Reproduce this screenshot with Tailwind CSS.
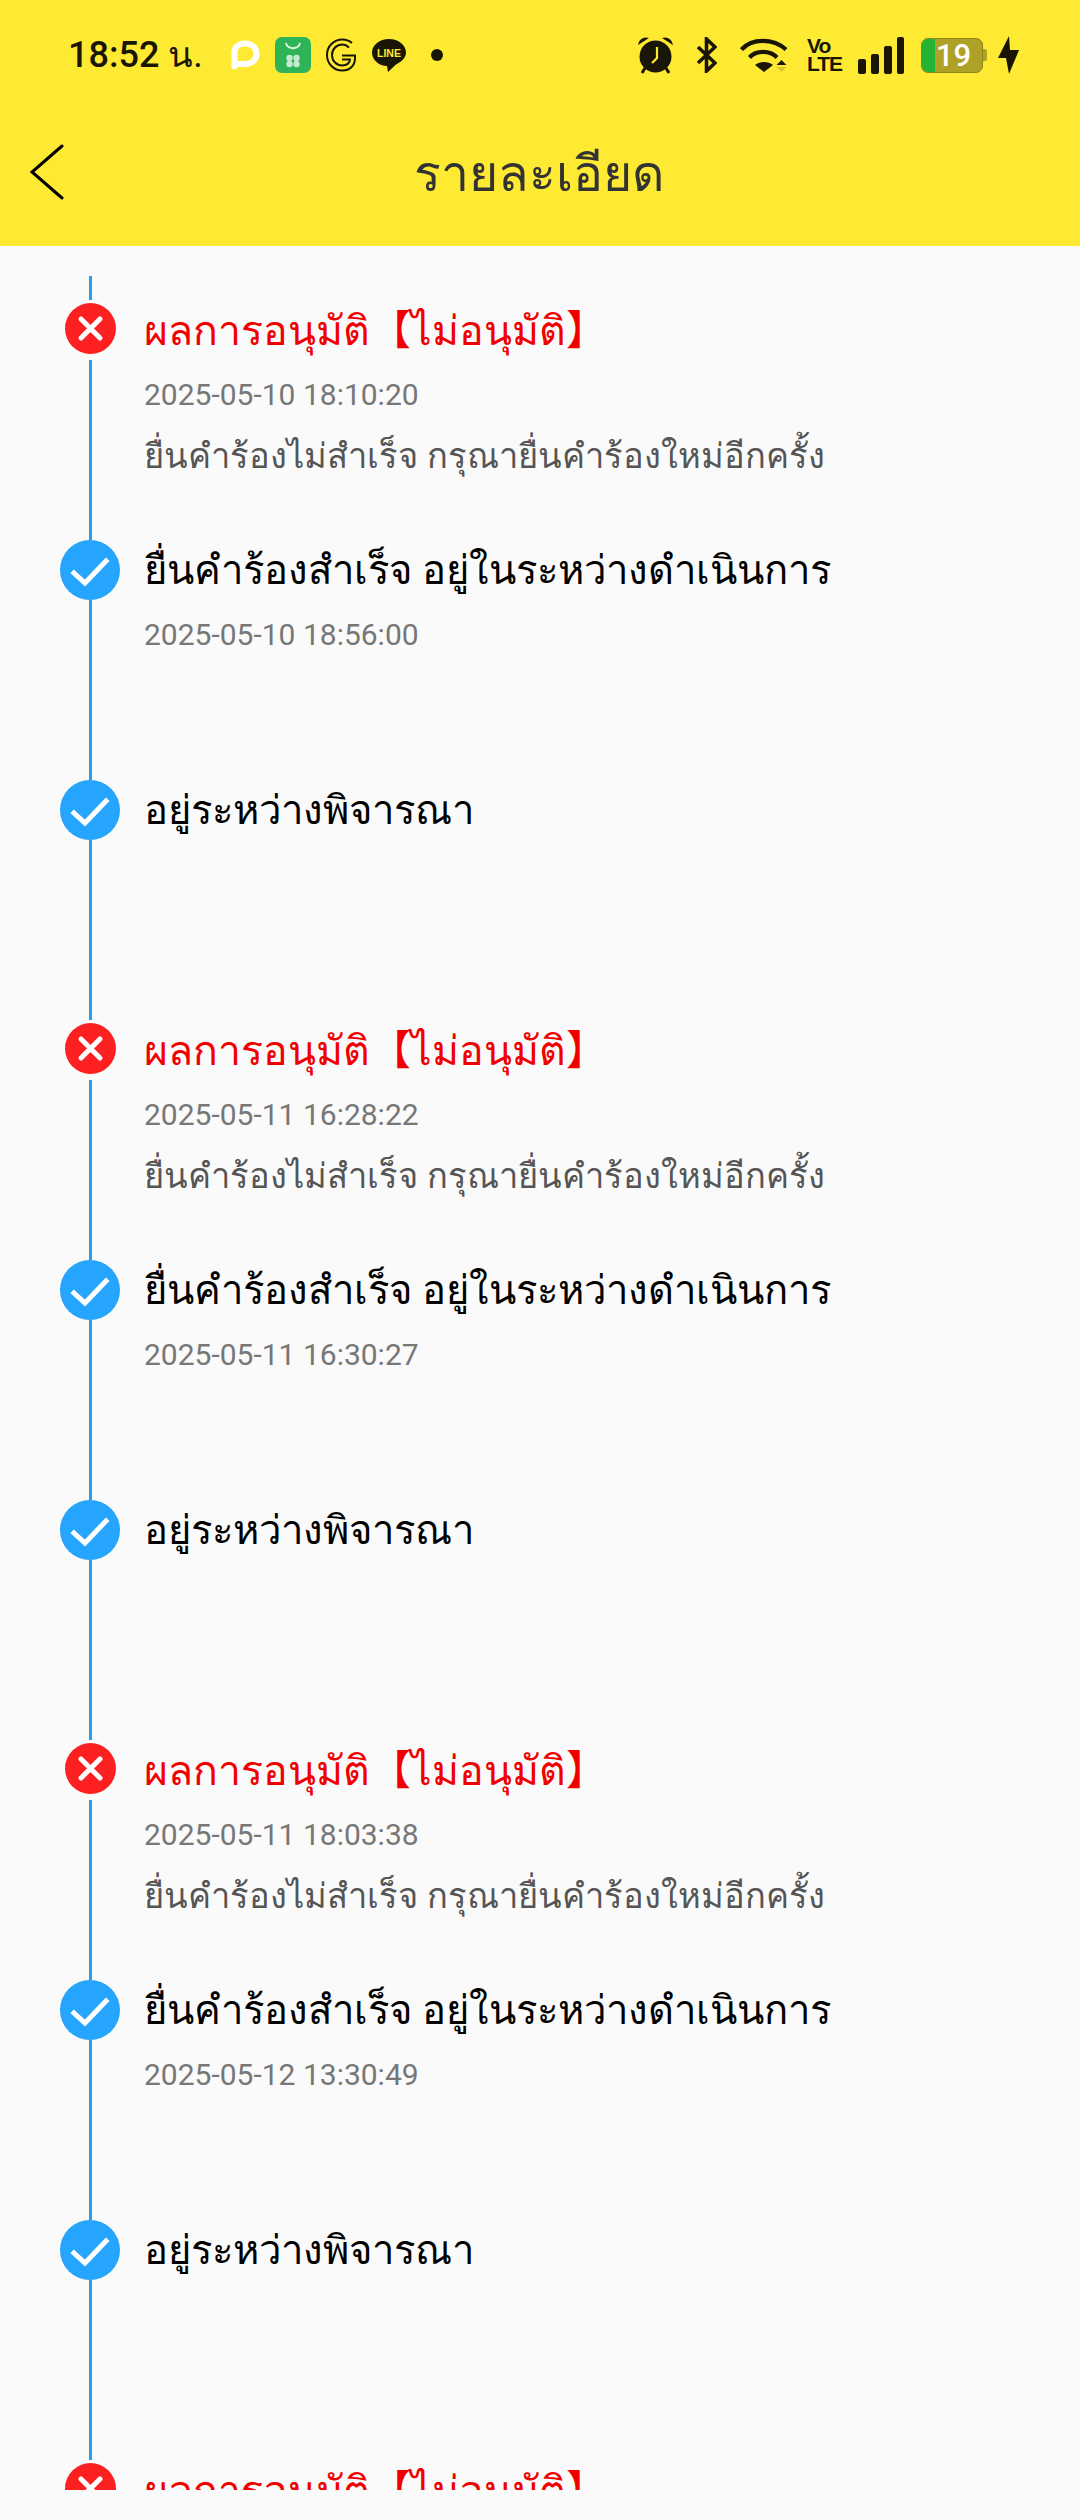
<!DOCTYPE html>
<html lang="th">
<head>
    <meta charset="UTF-8">
    <meta name="viewport" content="width=device-width, initial-scale=1.0">
    <title>รายละเอียด</title>
    <script src="https://cdn.jsdelivr.net/npm/@tailwindcss/browser@4"></script>
</head>
<body class="bg-[#fafafa] font-['Roboto','Noto_Sans','Noto_Sans_CJK_SC',sans-serif]">
<div class="w-[1080px] h-[2520px] overflow-hidden">

    <!-- Yellow header -->
    <header class="bg-[#ffea33] h-[246px]">
        <!-- Status bar -->
        <div class="h-[108px] flex items-center pl-[68px] pt-[2px] text-[#1a1605]">
            <span class="text-[36px] font-medium leading-none w-[162px] whitespace-nowrap">18:52 <span class="text-[36px] font-normal">น.</span></span>

            <svg class="w-[30px] h-[30px]" viewBox="0 0 30 30"><path d="M15 3.500c7 0 11.500 4.500 11.500 10.500S21.500 24 15 24H8c-2 0-3.500 1.500-3.500 2.500V14C3.500 8 8 3.500 15 3.500Z" fill="none" stroke="#fff" stroke-width="6" stroke-linejoin="round"/></svg>

            <svg class="w-[36px] h-[36px] ml-[15px]" viewBox="0 0 36 36"><rect width="36" height="36" rx="7" fill="#2eb356"/><path d="M11 6c1 7 13 7 14 0" fill="none" stroke="#d8f3dc" stroke-width="2"/><g fill="#c6ead0"><circle cx="14.500" cy="21" r="3.200"/><circle cx="21.500" cy="21" r="3.200"/><circle cx="14.500" cy="27" r="3.200"/><circle cx="21.500" cy="27" r="3.200"/></g></svg>

            <svg class="w-[30px] h-[34px] ml-[15px]" viewBox="0 0 30 34" fill="none" stroke="#1a1605" stroke-width="2"><path d="M26 5C23 2.500 20 1.500 16.500 1.500 7.500 1.500 1 8.500 1 17s6.500 15.500 15.500 15.500c7 0 12.500-4.500 12.500-12.500v-2.500H16"/><path d="M23 9.500C21 7.500 19 6.500 16.500 6.500 10.500 6.500 6 11 6 17s4.500 10.500 10.500 10.500c4.500 0 7.500-3 7.500-6H16"/></svg>

            <svg class="w-[34px] h-[33px] ml-[16px]" viewBox="0 0 34 33"><path d="M17 0C7.600 0 0 6 0 13.500S7 27 15 27l1 6 8-7.500c6-3 10-7 10-12C34 6 26.400 0 17 0Z" fill="#1a1605"/><text x="17" y="18" text-anchor="middle" font-family="Liberation Sans" font-weight="700" font-size="10.500" fill="#ffea33">LINE</text></svg>

            <span class="w-[12px] h-[12px] rounded-full bg-[#1a1605] ml-[25px]"></span>

            <svg class="w-[37px] h-[38px] ml-[194px]" viewBox="0 0 37 38"><circle cx="18.500" cy="20.500" r="16" fill="#1a1605"/><path d="M1 9C2 3 7 0 12 2ZM36 9C35 3 30 0 25 2Z" fill="#1a1605"/><path d="M8 32l-3 5M29 32l3 5" stroke="#1a1605" stroke-width="3"/><path d="M20 11v11l-5 5" fill="none" stroke="#ffea33" stroke-width="2.200"/></svg>

            <svg class="w-[21px] h-[36px] ml-[22px]" viewBox="0 0 21 36" fill="none" stroke="#1a1605" stroke-width="3.600"><path d="M2 10l17 16-8.500 8V2L19 10 2 26"/></svg>

            <svg class="w-[48px] h-[36px] ml-[23px]" viewBox="0 0 48 36"><g fill="none" stroke="#1a1605" stroke-width="4.200"><path d="M1.500 12.500C12 1 33 1 46 12.500"/><path d="M9.500 20.500C16 13 30 13 37 20.500"/></g><path d="M24 35l-9-7c4.500-4 13.500-4 18 0Z" fill="#1a1605"/><path d="M41.500 23l5 5h-10Z" fill="#1a1605"/><path d="M36.500 30h10l-5 5Z" fill="#d9c52d"/></svg>

            <div class="w-[32px] h-[36px] ml-[19px] font-['Liberation_Sans',sans-serif] font-bold text-[21px] leading-[18px] tracking-[-1px]">Vo<br>LTE</div>

            <div class="flex items-end gap-[5px] h-[37px] ml-[19px]">
                <span class="w-[8px] h-[15px] rounded-[2px] bg-[#1a1605]"></span>
                <span class="w-[8px] h-[20px] rounded-[2px] bg-[#1a1605]"></span>
                <span class="w-[8px] h-[28px] rounded-[2px] bg-[#1a1605]"></span>
                <span class="w-[7px] h-[37px] rounded-[2px] bg-[#1a1605]"></span>
            </div>

            <!-- Battery -->
            <div class="flex items-center ml-[17px]">
                <div class="relative w-[62px] h-[35px] rounded-[7px] border border-[#8f8418] bg-[#aea127] overflow-hidden">
                    <span class="absolute left-0 top-0 h-full w-[13px] bg-[#25b334]"></span>
                    <span class="absolute left-[14px] top-0 w-[34px] text-center text-[31px] font-medium leading-[33px] text-white">19</span>
                </div>
                <span class="w-[4px] h-[12px] rounded-r-[2px] bg-[#aea127]"></span>
            </div>

            <svg class="w-[21px] h-[38px] ml-[11px]" viewBox="0 0 21 38"><path d="M11 0L0 22h8L11 38 21 14h-9Z" fill="#1a1605"/></svg>
        </div>

        <!-- Title bar -->
        <div class="relative h-[138px] flex items-center justify-center">
            <svg class="absolute left-[30px] top-[36px] w-[34px] h-[56px]" viewBox="0 0 34 56" fill="none" stroke="#000" stroke-width="3" stroke-linecap="round"><path d="M32 2L2 28l30 26"/></svg>
            <h1 class="text-[#333] text-[50px] font-normal leading-none pb-[6px] pr-[3px]">รายละเอียด</h1>
        </div>
    </header>

    <!-- Timeline -->
    <main id="timeline" class="h-[2244px] pt-[30px] pl-[60px] overflow-hidden"></main>
</div>

<script>
    const rejectIcon = `
        <div class="w-[3px] h-[24px] bg-[#2a9fec]"></div>
        <svg class="w-[51px] h-[51px] mt-[3px] shrink-0" viewBox="0 0 51 51"><circle cx="25.500" cy="25.500" r="25.500" fill="#fd2020"/><path d="M16 16l19 19M35 16L16 35" stroke="#fff" stroke-width="5" stroke-linecap="round"/></svg>
        <div class="w-[3px] flex-1 mt-[6px] bg-[#2a9fec]"></div>`;
    const okIcon = `
        <div class="w-[3px] h-[24px] bg-[#2a9fec]"></div>
        <svg class="w-[60px] h-[60px] shrink-0" viewBox="0 0 60 60"><circle cx="30" cy="30" r="30" fill="#25a5fd"/><path d="M14 33l11 10 21-22" fill="none" stroke="#fff" stroke-width="5" stroke-linecap="square"/></svg>
        <div class="w-[3px] flex-1 bg-[#2a9fec]"></div>`;

    const rejectedTitle = `<p class="text-[41px] leading-[50px] mt-[2px] text-[#f00000] whitespace-nowrap">ผลการอนุมัติ【ไม่อนุมัติ】</p>`;

    const groups = [
        ['2025-05-10 18:10:20', '2025-05-10 18:56:00'],
        ['2025-05-11 16:28:22', '2025-05-11 16:30:27'],
        ['2025-05-11 18:03:38', '2025-05-12 13:30:49']
    ];

    function row(icon, body) {
        return `<div class="flex h-[240px]"><div class="w-[60px] flex flex-col items-center">${icon}</div><div class="ml-[24px] pt-[28px]">${body}</div></div>`;
    }

    let html = '';
    for (const [rejected, submitted] of groups) {
        html += row(rejectIcon, `
            ${rejectedTitle}
            <p class="text-[30px] leading-[40px] mt-[19px] text-[#777]">${rejected}</p>
            <p class="text-[34.500px] leading-[40px] mt-[21px] text-[#555] whitespace-nowrap">ยื่นคำร้องไม่สำเร็จ กรุณายื่นคำร้องใหม่อีกครั้ง</p>`);
        html += row(okIcon, `
            <p class="text-[40px] leading-[50px] mt-[2px] text-black whitespace-nowrap">ยื่นคำร้องสำเร็จ อยู่ในระหว่างดำเนินการ</p>
            <p class="text-[30px] leading-[40px] mt-[19px] text-[#777]">${submitted}</p>`);
        html += row(okIcon, `<p class="text-[40px] leading-[50px] mt-[2px] text-black whitespace-nowrap">อยู่ระหว่างพิจารณา</p>`);
    }
    // last row is cut off by the bottom of the list
    html += row(rejectIcon, rejectedTitle);
    document.getElementById('timeline').innerHTML = html;
</script>
</body>
</html>
